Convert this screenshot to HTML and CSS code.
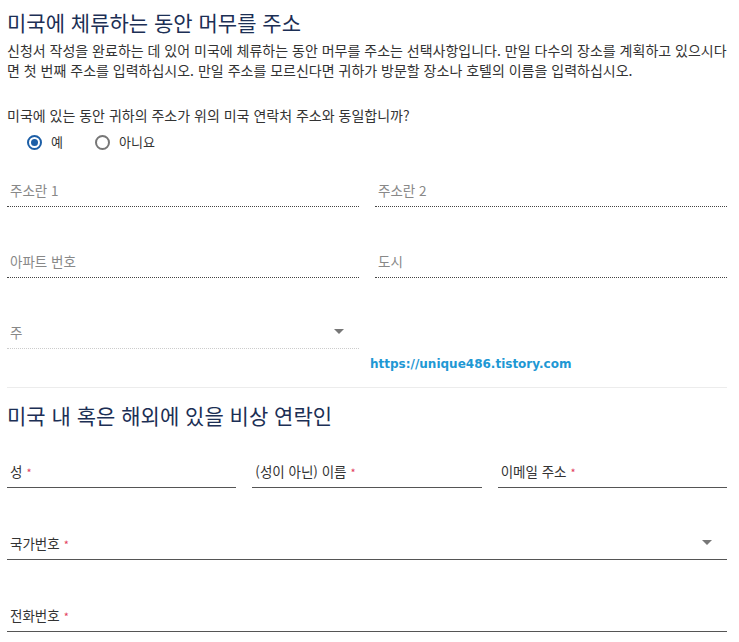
FILE: index.html
```html
<!DOCTYPE html>
<html lang="ko">
<head>
  <meta charset="UTF-8" />
  <meta name="viewport" content="width=device-width, initial-scale=1" />
  <title>미국에 체류하는 동안 머무를 주소</title>
  <link rel="stylesheet" href="styles.css">
</head>
<body>
  <main class="page">
    <h1 class="section-title">미국에 체류하는 동안 머무를 주소</h1>
    <p class="desc">신청서 작성을 완료하는 데 있어 미국에 체류하는 동안 머무를 주소는 선택사항입니다. 만일 다수의 장소를 계획하고 있으시다면 첫 번째 주소를 입력하십시오. 만일 주소를 모르신다면 귀하가 방문할 장소나 호텔의 이름을 입력하십시오.</p>

    <p class="question">미국에 있는 동안 귀하의 주소가 위의 미국 연락처 주소와 동일합니까?</p>
    <div class="radios">
      <label class="radio">
        <span class="radio-dot checked"></span>
        <span>예</span>
      </label>
      <label class="radio">
        <span class="radio-dot"></span>
        <span>아니요</span>
      </label>
    </div>

    <div class="grid-2">
      <div class="field dotted"><span class="label muted">주소란 1</span></div>
      <div class="field dotted"><span class="label muted">주소란 2</span></div>
      <div class="field dotted"><span class="label muted">아파트 번호</span></div>
      <div class="field dotted"><span class="label muted">도시</span></div>
      <div class="field dotted light select">
        <span class="label muted">주</span>
        <span class="caret"></span>
      </div>
      <div class="stamp-cell">
        <a class="stamp" href="#">https://unique486.tistory.com</a>
      </div>
    </div>

    <hr class="divider" />

    <h2 class="section-title">미국 내 혹은 해외에 있을 비상 연락인</h2>

    <div class="contact">
      <div class="grid-3">
        <div class="field solid"><span class="label">성<i class="req">*</i></span></div>
        <div class="field solid"><span class="label">(성이 아닌) 이름<i class="req">*</i></span></div>
        <div class="field solid"><span class="label">이메일 주소<i class="req">*</i></span></div>
      </div>
      <div class="field solid select">
        <span class="label">국가번호<i class="req">*</i></span>
        <span class="caret"></span>
      </div>
      <div class="field solid"><span class="label">전화번호<i class="req">*</i></span></div>
    </div>
  </main>
</body>
</html>
```

FILE: styles.css
```css
* {
  box-sizing: border-box;
}

body {
  margin: 0;
  background: #fff;
  font-family: "Noto Sans CJK KR", "Liberation Sans", sans-serif;
  color: #333;
  font-size: 13px;
  line-height: 20px;
}

.page {
  width: 720px;
  margin-left: 7px;
  padding-top: 8px;
}

.section-title {
  margin: 0;
  font-size: 21px;
  font-weight: 400;
  line-height: 28px;
  color: #1c2f55;
}

.desc {
  margin: 4px 0 0;
  font-size: 14px;
}

.question {
  margin: 25px 0 0;
  font-size: 14px;
}

/* radio buttons */
.radios {
  display: flex;
  gap: 32px;
  margin-top: 7px;
  padding-left: 20px;
}

.radio {
  display: flex;
  align-items: center;
  gap: 9px;
  height: 20px;
}

.radio-dot {
  width: 15px;
  height: 15px;
  border: 2px solid #777;
  border-radius: 50%;
  display: flex;
  align-items: center;
  justify-content: center;
}

.radio-dot.checked {
  border-color: #1d5fa7;
}

.radio-dot.checked::after {
  content: "";
  width: 7px;
  height: 7px;
  border-radius: 50%;
  background: #1d5fa7;
}

/* fields */
.grid-2 {
  display: grid;
  grid-template-columns: 1fr 1fr;
  column-gap: 16px;
  row-gap: 24px;
  margin-top: 8px;
}

.grid-3 {
  display: grid;
  grid-template-columns: 1fr 1fr 1fr;
  column-gap: 16px;
}

.field {
  position: relative;
  padding: 20px 3px 6px;
}

.field.dotted {
  border-bottom: 1px dotted #444;
}

.field.dotted.light {
  border-bottom-color: #ccc;
}

.field.solid {
  border-bottom: 1px solid #555;
}

.label {
  display: block;
  height: 20px;
  font-size: 13.5px;
}

.label.muted {
  color: #888;
}

.req {
  font-style: normal;
  color: #e2405c;
  margin-left: 4px;
  font-size: 11px;
}

.caret {
  position: absolute;
  right: 15px;
  bottom: 14px;
  width: 0;
  height: 0;
  border-left: 5px solid transparent;
  border-right: 5px solid transparent;
  border-top: 5px solid #777;
}

.stamp-cell {
  position: relative;
}

.stamp {
  position: absolute;
  left: -5px;
  top: 100%;
  margin-top: 5px;
  font-family: "DejaVu Sans", sans-serif;
  font-weight: 700;
  font-size: 12px;
  color: #1e98d4;
  text-decoration: none;
  white-space: nowrap;
}

.divider {
  margin: 38px 0 0;
  border: 0;
  border-top: 1px solid #ececec;
}

h2.section-title {
  margin-top: 13px;
}

.contact {
  display: flex;
  flex-direction: column;
  gap: 25px;
  margin-top: 12px;
}
```
